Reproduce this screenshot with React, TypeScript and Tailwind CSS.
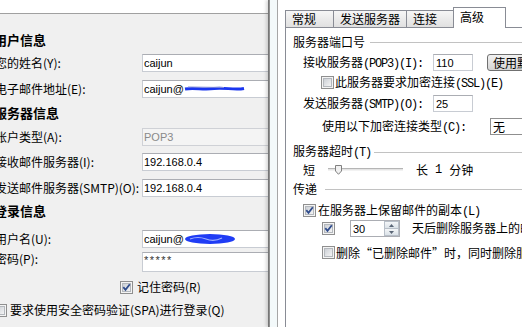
import React from "react";

function Mixed({ t }: { t: string }) {
  const parts = t.match(/[\x00-\x7f]+|[^\x00-\x7f]+/g) || [];
  return (
    <>
      {parts.map((p, i) =>
        p.charCodeAt(0) < 128 ? (
          <span key={i} className="font-['Liberation_Mono',monospace] tracking-[-1.2px] whitespace-pre">
            {p}
          </span>
        ) : (
          <span key={i} className="font-['Noto_Sans_CJK_SC',sans-serif]">
            {p}
          </span>
        )
      )}
    </>
  );
}

function Check({ checked }: { checked?: boolean }) {
  return (
    <svg width="13" height="13" viewBox="0 0 13 13" className="block shrink-0">
      <defs>
        <linearGradient id="cbg" x1="0" y1="0" x2="1" y2="1">
          <stop offset="0" stopColor="#c9cdd3" />
          <stop offset="1" stopColor="#f7f7f7" />
        </linearGradient>
      </defs>
      <rect x="0.5" y="0.5" width="12" height="12" fill="#f4f4f4" stroke="#8f8f8f" />
      <rect x="2.5" y="2.5" width="8" height="8" fill="url(#cbg)" stroke="#b4b8bd" />
      {checked && (
        <path d="M3.3 6.2 L5.5 8.8 L9.8 3.3" fill="none" stroke="#2f4c8c" strokeWidth="1.8" />
      )}
    </svg>
  );
}

function LRow({ mt, label, children }: { mt: string; label: string; children: React.ReactNode }) {
  return (
    <div className={`${mt} h-[18px] flex items-center shrink-0`}>
      <div className="w-[147px] shrink-0 whitespace-nowrap">{label}</div>
      {children}
    </div>
  );
}

function LInput({ children, disabled }: { children: React.ReactNode; disabled?: boolean }) {
  return (
    <div
      className={
        disabled
          ? "h-full w-[140px] shrink-0 bg-[#f4f4f4] border border-[#cfd1d6] pl-[1px] flex items-center font-['Liberation_Sans',sans-serif] text-[11px] text-[#8a8a8a]"
          : "h-full w-[140px] shrink-0 bg-white border border-[#c8ccd3] border-t-[#abadb3] pl-[1px] flex items-center font-['Liberation_Sans',sans-serif] text-[11px] text-black"
      }
    >
      {children}
    </div>
  );
}

function GroupHead({ mt, label, gap }: { mt: string; label: string; gap: string }) {
  return (
    <div className={`${mt} h-[14px] flex items-center shrink-0`}>
      <span className="whitespace-nowrap">
        <Mixed t={label} />
      </span>
      <div className={`${gap} flex-1 h-px bg-[#c2c2c2]`} />
    </div>
  );
}

export default function App() {
  return (
    <div className="w-[522px] h-[327px] flex overflow-hidden bg-white">
      {/* Left window */}
      <div className="w-[268px] h-full shrink-0 overflow-hidden bg-[#f0f0f0] flex flex-col font-['Noto_Sans_CJK_SC',sans-serif] text-[12px] leading-[14px] text-black">
        <div className="h-[14px] shrink-0 bg-white border-b border-[#a0a0a0]" />
        <div className="-ml-[5px] flex flex-col">
          <div className="mt-[17px] -ml-px h-[18px] flex items-center font-bold text-[13px] shrink-0">用户信息</div>
          <LRow mt="mt-[5px]" label="您的姓名(Y):">
            <LInput>caijun</LInput>
          </LRow>
          <LRow mt="mt-[8px]" label="电子邮件地址(E):">
            <LInput>
              <span>caijun@</span>
              <svg width="62" height="10" viewBox="0 0 62 10" className="block">
                <path d="M1 5 C10 3.5 20 6 30 4.5 S 50 6.5 60 4.5" fill="none" stroke="#1a36f0" strokeWidth="3" />
                <path d="M4 3 L40 3.5" fill="none" stroke="#7f8ad8" strokeWidth="1" />
              </svg>
            </LInput>
          </LRow>
          <div className="mt-[6px] -ml-px h-[18px] flex items-center font-bold text-[13px] shrink-0">服务器信息</div>
          <LRow mt="mt-[6px]" label="账户类型(A):">
            <LInput disabled>POP3</LInput>
          </LRow>
          <LRow mt="mt-[7px]" label="接收邮件服务器(I):">
            <LInput>192.168.0.4</LInput>
          </LRow>
          <LRow mt="mt-[8px]" label="发送邮件服务器(SMTP)(O):">
            <LInput>192.168.0.4</LInput>
          </LRow>
          <div className="mt-[5px] -ml-px h-[18px] flex items-center font-bold text-[13px] shrink-0">登录信息</div>
          <LRow mt="mt-[10px]" label="用户名(U):">
            <LInput>
              <span>caijun@</span>
              <svg width="52" height="12" viewBox="0 0 52 12" className="block">
                <ellipse cx="26" cy="6" rx="25" ry="5" fill="#1f3cf5" />
                <path d="M6 6 Q14 3 22 6 T38 5" fill="none" stroke="#9fb0ff" strokeWidth="1.2" />
              </svg>
            </LInput>
          </LRow>
          <div className="mt-[4px] h-[20px] flex items-start shrink-0">
            <div className="w-[147px] shrink-0 whitespace-nowrap">密码(P):</div>
            <div className="h-full w-[140px] shrink-0 bg-white border border-[#c8ccd3] border-t-[#abadb3] pl-[1px] pt-px font-['Liberation_Sans',sans-serif] text-[11px] leading-[12px] tracking-[1.5px] text-[#333]">
              *****
            </div>
          </div>
          <div className="mt-[8px] h-[14px] flex items-center shrink-0 pl-[125px]">
            <Check checked />
            <span className="ml-[4px] whitespace-nowrap">记住密码(R)</span>
          </div>
          <div className="mt-[9px] h-[14px] flex items-center shrink-0 -ml-px">
            <Check />
            <span className="ml-[3px] whitespace-nowrap">要求使用安全密码验证(SPA)进行登录(Q)</span>
          </div>
        </div>
      </div>

      {/* Right dialog */}
      <div className="flex-1 h-full flex min-w-0 shadow-[-2px_0_3px_rgba(0,0,0,0.15)]">
        <div className="w-[2px] shrink-0 bg-gradient-to-r from-[#6a6a6a] to-[#9c9c9c]" />
        <div className="w-[7px] shrink-0 bg-[#f3f9fa]" />
        <div className="w-px shrink-0 bg-[#a6a6a6]" />
        <div className="flex-1 min-w-0 bg-white pl-[7px] flex flex-col overflow-hidden text-[12px] leading-[14px] text-black font-['Noto_Sans_CJK_SC',sans-serif]">
          <div className="h-[27px] shrink-0 flex items-end">
            <div className="h-[17px] w-[49px] shrink-0 border-t border-x border-[#898c95] bg-gradient-to-b from-[#f6f6f6] to-[#e0e0e0] pl-[6px] flex items-center">
              常规
            </div>
            <div className="-ml-px h-[17px] w-[74px] shrink-0 border-t border-x border-[#898c95] bg-gradient-to-b from-[#f6f6f6] to-[#e0e0e0] pl-[6px] flex items-center">
              发送服务器
            </div>
            <div className="-ml-px h-[17px] w-[48px] shrink-0 border-t border-x border-[#898c95] bg-gradient-to-b from-[#f6f6f6] to-[#e0e0e0] pl-[6px] flex items-center">
              连接
            </div>
            <div className="-ml-px relative z-10 -mb-px h-[21px] w-[53px] shrink-0 border-t border-x border-[#898c95] bg-white pl-[6px] pb-[2px] flex items-center">
              高级
            </div>
          </div>
          <div className="flex-1 border-t border-l border-[#898c95] bg-white pl-[7px] flex flex-col whitespace-nowrap">
            <GroupHead mt="mt-[7px]" label="服务器端口号" gap="ml-[5px]" />
            {/* POP3 row */}
            <div className="mt-[5px] h-[17px] flex items-center shrink-0">
              <div className="ml-[10px] w-[130px] shrink-0">
                <Mixed t="接收服务器(POP3)(I):" />
              </div>
              <div className="h-full w-[40px] shrink-0 border border-[#c8ccd3] border-t-[#abadb3] bg-white pl-[2px] flex items-center font-['Liberation_Sans',sans-serif] text-[11px]">
                110
              </div>
              <div className="ml-[14px] h-[17px] w-[80px] shrink-0 rounded-[3px] border border-[#707070] bg-gradient-to-b from-[#f2f2f2] to-[#d4d4d4] pl-[5px] flex items-center">
                使用默认值
              </div>
            </div>
            {/* SSL */}
            <div className="mt-[5px] h-[13px] flex items-center shrink-0">
              <div className="ml-[28px]">
                <Check />
              </div>
              <span className="ml-[1px]">
                <Mixed t="此服务器要求加密连接(SSL)(E)" />
              </span>
            </div>
            {/* SMTP */}
            <div className="mt-[6px] h-[17px] flex items-center shrink-0">
              <div className="ml-[10px] w-[130px] shrink-0">
                <Mixed t="发送服务器(SMTP)(O):" />
              </div>
              <div className="h-full w-[40px] shrink-0 border border-[#c8ccd3] border-t-[#abadb3] bg-white pl-[2px] flex items-center font-['Liberation_Sans',sans-serif] text-[11px]">
                25
              </div>
            </div>
            {/* encryption type */}
            <div className="mt-[6px] h-[17px] flex items-center shrink-0">
              <div className="ml-[29px] w-[168px] shrink-0">
                <Mixed t="使用以下加密连接类型(C):" />
              </div>
              <div className="h-full w-[60px] shrink-0 border border-[#8f8f8f] bg-white pl-[2px] flex items-center">
                无
              </div>
            </div>
            <GroupHead mt="mt-[10px]" label="服务器超时(T)" gap="ml-[3px]" />
            {/* slider */}
            <div className="mt-[4px] h-[14px] flex items-center shrink-0">
              <span className="ml-[10px]">短</span>
              <div className="ml-[13px] w-[75px] h-[10px] relative shrink-0">
                <div className="absolute left-0 right-0 top-[3px] h-[3px] border-t border-[#b5b5b5] border-b border-b-[#f2f2f2] bg-[#e4e4e4]" />
                <svg width="7" height="10" viewBox="0 0 7 10" className="absolute left-[7px] top-0">
                  <path d="M0.5 0.5 H6.5 V6 L3.5 9.3 L0.5 6 Z" fill="#f1f1f1" stroke="#808080" />
                </svg>
              </div>
              <span className="ml-[13px]">长</span>
              <span className="ml-[7px] font-['Liberation_Mono',monospace]">1</span>
              <span className="ml-[7px]">分钟</span>
            </div>
            <GroupHead mt="mt-[5px]" label="传递" gap="ml-[8px]" />
            {/* keep copy */}
            <div className="mt-[8px] h-[13px] flex items-center shrink-0">
              <div className="ml-[10px]">
                <Check checked />
              </div>
              <span className="ml-[2px]">
                <Mixed t="在服务器上保留邮件的副本(L)" />
              </span>
            </div>
            {/* spin row */}
            <div className="mt-[3px] h-[17px] flex items-center shrink-0">
              <div className="ml-[29px]">
                <Check checked />
              </div>
              <div className="ml-[15px] h-full w-[50px] shrink-0 border border-[#abadb3] bg-white flex">
                <div className="flex-1 pl-[2px] flex items-center font-['Liberation_Sans',sans-serif] text-[11px]">30</div>
                <div className="w-[15px] flex flex-col">
                  <div className="flex-1 bg-gradient-to-b from-[#f4f6f8] to-[#dbe2e8] border border-[#b8bfc8] flex items-center justify-center">
                    <svg width="5" height="3" viewBox="0 0 5 3" className="block">
                      <path d="M0 3 L2.5 0 L5 3Z" fill="#5a6676" />
                    </svg>
                  </div>
                  <div className="flex-1 bg-gradient-to-b from-[#f4f6f8] to-[#dbe2e8] border border-t-0 border-[#b8bfc8] flex items-center justify-center">
                    <svg width="5" height="3" viewBox="0 0 5 3" className="block">
                      <path d="M0 0 L2.5 3 L5 0Z" fill="#5a6676" />
                    </svg>
                  </div>
                </div>
              </div>
              <span className="ml-[12px]">
                <Mixed t="天后删除服务器上的邮件(R)" />
              </span>
            </div>
            {/* delete row */}
            <div className="mt-[9px] h-[13px] flex items-center shrink-0">
              <div className="ml-[29px]">
                <Check />
              </div>
              <span className="ml-[1px]">
                删除“已删除邮件”时，同时删除服务器上的邮件(M)
              </span>
            </div>
          </div>
        </div>
      </div>
    </div>
  );
}
